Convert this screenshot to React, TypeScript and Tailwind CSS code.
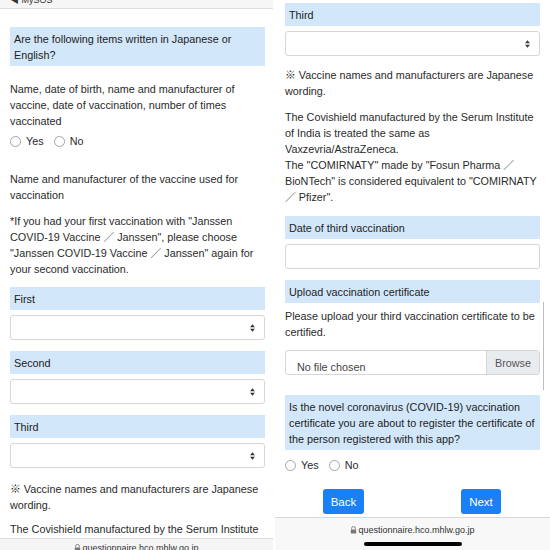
import React from "react";

const Label = ({ children, className = "" }: { children: React.ReactNode; className?: string }) => (
  <div className={`bg-[#d3e7fa] px-[4px] py-[3.5px] leading-[16px] text-[#222] ${className}`}>
    {children}
  </div>
);

const UpDown = () => (
  <svg width="5" height="8" viewBox="0 0 5 8" aria-hidden="true">
    <path d="M0 3.3 L2.5 0.2 L5 3.3 Z M0 4.7 L2.5 7.8 L5 4.7 Z" fill="#3a3a3a" />
  </svg>
);

const Select = ({ className = "" }: { className?: string }) => (
  <div
    className={`h-[25px] rounded-[3px] border border-[#d6d6d6] bg-white flex items-center justify-end pr-[9px] ${className}`}
  >
    <UpDown />
  </div>
);

const Radio = () => (
  <span className="inline-block w-[11px] h-[11px] rounded-full border border-[#a4a4a4] bg-white" />
);

const Radios = ({ className = "" }: { className?: string }) => (
  <div className={`flex items-center h-[16px] leading-[16px] ${className}`}>
    <Radio />
    <span className="ml-[5px]">Yes</span>
    <span className="ml-[10px] flex items-center">
      <Radio />
    </span>
    <span className="ml-[5px]">No</span>
  </div>
);

const Lock = () => (
  <svg width="7" height="8" viewBox="0 0 7 8" className="mr-[1px]" aria-hidden="true">
    <path d="M1.6 3.4 V2.4 A1.9 1.9 0 0 1 5.4 2.4 V3.4" fill="none" stroke="#777" strokeWidth="0.9" />
    <rect x="0.8" y="3.4" width="5.4" height="4.2" rx="0.6" fill="#777" />
  </svg>
);

const UrlText = () => (
  <div className="flex items-center text-[9px] leading-[10px] text-[#333]">
    <Lock />
    questionnaire.hco.mhlw.go.jp
  </div>
);

const LeftScreen = () => (
  <div className="w-[275px] h-[550px] flex flex-col overflow-hidden">
    <div className="h-[9px] w-[273px] bg-[#f6f6f6] border-b border-[#dedede] overflow-hidden pl-[10px]">
      <div className="text-[9px] leading-[9px] -mt-[4px] text-[#333]">◀ MySOS</div>
    </div>
    <div className="flex-1 min-h-0 overflow-hidden px-[10px]">
      <Label className="mt-[18px]">Are the following items written in Japanese or English?</Label>
      <p className="mt-[15px]">
        Name, date of birth, name and manufacturer of vaccine, date of vaccination, number of times
        vaccinated
      </p>
      <Radios className="mt-[4px]" />
      <p className="mt-[22px]">Name and manufacturer of the vaccine used for vaccination</p>
      <p className="mt-[10px]">
        *If you had your first vaccination with "Janssen COVID-19 Vaccine ／ Janssen", please choose
        "Janssen COVID-19 Vaccine ／ Janssen" again for your second vaccination.
      </p>
      <Label className="mt-[10px]">First</Label>
      <Select className="mt-[5px]" />
      <Label className="mt-[11px]">Second</Label>
      <Select className="mt-[5px]" />
      <Label className="mt-[11px]">Third</Label>
      <Select className="mt-[5px]" />
      <p className="mt-[13px]">※ Vaccine names and manufacturers are Japanese wording.</p>
      <p className="mt-[8px]">
        The Covishield manufactured by the Serum Institute of India is treated the same as
      </p>
    </div>
    <div className="h-[12px] w-[273px] bg-[#f5f5f5] border-t border-[#dcdcdc] flex justify-center pt-[6px] overflow-hidden">
      <UrlText />
    </div>
  </div>
);

const RightScreen = () => (
  <div className="w-[275px] h-[550px] flex flex-col overflow-hidden relative">
    <div className="flex-1 min-h-0 overflow-hidden px-[10px]">
      <Label className="mt-[3px]">Third</Label>
      <Select className="mt-[5px]" />
      <p className="mt-[11px]">※ Vaccine names and manufacturers are Japanese wording.</p>
      <p className="mt-[10px]">
        The Covishield manufactured by the Serum Institute of India is treated the same as
        Vaxzevria/AstraZeneca.
        <br />
        The "COMIRNATY" made by "Fosun Pharma ／ BioNTech" is considered equivalent to "COMIRNATY ／
        Pfizer".
      </p>
      <Label className="mt-[11px]">Date of third vaccination</Label>
      <div className="mt-[5px] h-[25px] rounded-[3px] border border-[#d6d6d6] bg-white" />
      <Label className="mt-[11px]">Upload vaccination certificate</Label>
      <p className="mt-[5px]">Please upload your third vaccination certificate to be certified.</p>
      <div className="mt-[10px] h-[25px] rounded-[3px] border border-[#d6d6d6] flex overflow-hidden">
        <div className="flex-1 pl-[11px] pt-[9px] leading-[14px] text-[#444]">No file chosen</div>
        <div className="w-[53px] bg-[#e9ecef] border-l border-[#d6d6d6] flex items-center justify-center text-[#555]">
          Browse
        </div>
      </div>
      <Label className="mt-[20px] py-[2.5px]">
        Is the novel coronavirus (COVID-19) vaccination certificate you are about to register the
        certificate of the person registered with this app?
      </Label>
      <Radios className="mt-[7px]" />
      <div className="mt-[16px] flex">
        <button className="ml-[38px] w-[41px] h-[25px] rounded-[3px] bg-[#1a80f6] text-white text-[11.5px]">
          Back
        </button>
        <button className="ml-auto mr-[39px] w-[40px] h-[25px] rounded-[3px] bg-[#1a80f6] text-white text-[11.5px]">
          Next
        </button>
      </div>
    </div>
    <div className="h-[33px] bg-[#f8f8f8] border-t border-[#d8d8d8] flex flex-col items-center pt-[7px]">
      <UrlText />
      <div className="mt-[7px] w-[98px] h-[4px] rounded-full bg-black" />
    </div>
    <div className="absolute left-[268px] top-[302px] w-px h-[88px] bg-[#bdbdbd]" />
  </div>
);

export default function App() {
  return (
    <div className="w-[550px] h-[550px] bg-white flex overflow-hidden font-['Liberation_Sans','Noto_Sans_CJK_JP',sans-serif] text-[10.8px] leading-[16px] text-[#2a2a2a]">
      <LeftScreen />
      <RightScreen />
    </div>
  );
}
